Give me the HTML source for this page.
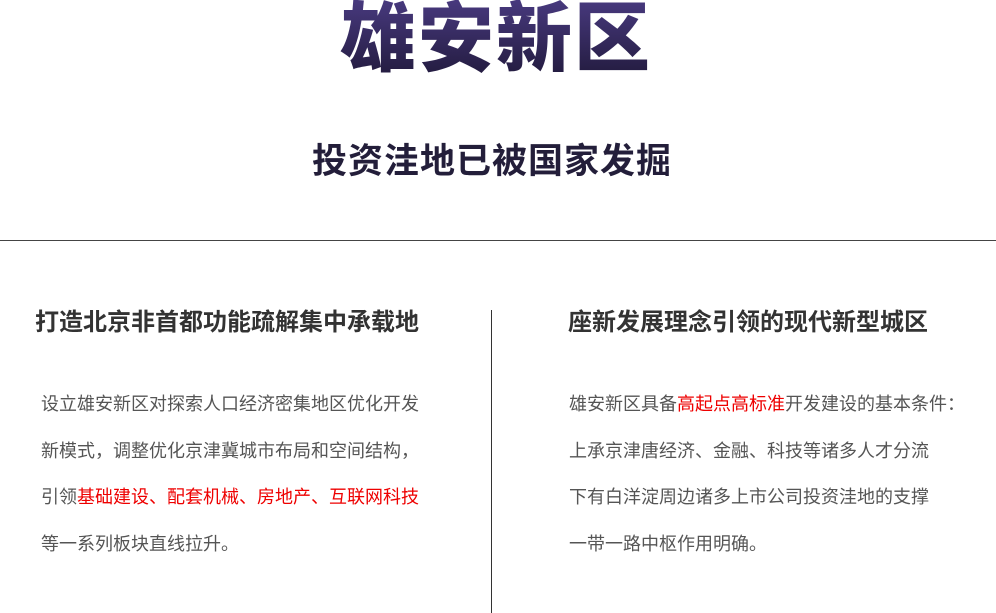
<!DOCTYPE html>
<html><head><meta charset="utf-8"><style>
*{margin:0;padding:0}
body{width:996px;height:613px;background:#fff;position:relative;overflow:hidden;font-family:"Liberation Sans","Noto Sans CJK SC",sans-serif}
.a{position:absolute;white-space:nowrap}
.logo{left:340px;top:-5px;font-size:76px;font-weight:900;letter-spacing:2px;background:linear-gradient(#4a3b82,#1f1838);-webkit-background-clip:text;color:transparent;line-height:90px}
.t{left:312px;top:140px;font-size:35px;font-weight:bold;color:#231e3a;line-height:44px;letter-spacing:1px}
.hl{left:0;top:240px;width:996px;height:1px;background:#444}
.vl{left:491px;top:310px;width:1px;height:303px;background:#333}
h3{position:absolute;font-size:24px;font-weight:bold;color:#333;white-space:nowrap;line-height:30px}
.p{position:absolute;font-size:18px;color:#555;line-height:46.7px;white-space:nowrap}
.r{color:#e00}
</style></head><body>
<div class="a logo">雄安新区</div>
<div class="a t">投资洼地已被国家发掘</div>
<div class="a hl"></div>
<div class="a vl"></div>
<h3 style="left:35px;top:308px">打造北京非首都功能疏解集中承载地</h3>
<div class="p" style="left:41px;top:381px">设立雄安新区对探索人口经济密集地区优化开发<br>新模式，调整优化京津冀城市布局和空间结构，<br>引领<span class="r">基础建设、配套机械、房地产、互联网科技</span><br>等一系列板块直线拉升。</div>
<h3 style="left:568px;top:308px">座新发展理念引领的现代新型城区</h3>
<div class="p" style="left:569px;top:381px">雄安新区具备<span class="r">高起点高标准</span>开发建设的基本条件：<br>上承京津唐经济、金融、科技等诸多人才分流<br>下有白洋淀周边诸多上市公司投资洼地的支撑<br>一带一路中枢作用明确。</div>
</body></html>
